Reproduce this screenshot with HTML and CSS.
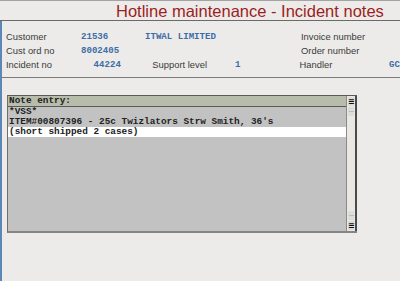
FILE: index.html
```html
<!DOCTYPE html>
<html lang="en">
<head>
  <meta charset="UTF-8">
  <title>Hotline maintenance - Incident notes</title>
  <link rel="stylesheet" href="styles.css">
</head>
<body>
  <div class="screen">
    <!-- Title bar -->
    <div class="title-bar">
      <h1>Hotline maintenance - Incident notes</h1>
    </div>

    <div class="main">
      <!-- Incident header fields -->
      <div class="info">
        <div class="row">
          <span class="lbl w-lbl">Customer</span>
          <span class="val w-code">21536</span>
          <span class="val w-name">ITWAL LIMITED</span>
          <span class="lbl">Invoice number</span>
        </div>
        <div class="row">
          <span class="lbl w-lbl">Cust ord no</span>
          <span class="val w-order">8002405</span>
          <span class="lbl">Order number</span>
        </div>
        <div class="row">
          <span class="lbl w-lbl">Incident no</span>
          <span class="val w-inc">44224</span>
          <span class="lbl w-sup">Support level</span>
          <span class="val w-lvl">1</span>
          <span class="lbl w-hdl">Handler</span>
          <span class="val">GC</span>
        </div>
      </div>

      <!-- Notes area -->
      <div class="notes-area">
        <div class="note-box">
          <div class="note-text">
            <div class="note-head">Note entry:</div>
            <div class="note-line">*VSS*</div>
            <div class="note-line">ITEM#00807396 - 25c Twizlators Strw Smith, 36's</div>
            <div class="note-line current">(short shipped 2 cases)</div>
          </div>
          <div class="scroll">
            <div class="sbtn dark">&#8801;</div>
            <div class="sbtn light">&minus;</div>
            <div class="track"></div>
            <div class="sbtn light">&minus;</div>
            <div class="sbtn dark">&#8801;</div>
          </div>
        </div>
      </div>
    </div>
  </div>
</body>
</html>
```

FILE: styles.css
```css
/* Reset */
* {
  box-sizing: border-box;
  margin: 0;
  padding: 0;
}
body {
  background: #ecebe9;
  font-family: 'Liberation Sans', Arial, sans-serif;
  color: #3a3a3a;
  overflow: hidden;
}
.screen {
  width: 400px;
  height: 281px;
  border-top: 1px solid #a4a4a2;
  display: flex;
  flex-direction: column;
}
/* Title */
.title-bar {
  height: 20px;
  border-bottom: 1px solid #6a6a68;
  padding-left: 116px;
}
.title-bar h1 {
  font-weight: normal;
  font-size: 16.5px;
  line-height: 20px;
  color: #9c1e22;
  white-space: nowrap;
}
.main {
  flex: 1;
  display: flex;
  flex-direction: column;
  border-left: 2px solid #5b86b5;
}
/* Header fields */
.info {
  height: 57px;
  padding: 8px 0 0 4px;
  border-bottom: 1px solid #7a7a78;
  overflow: hidden;
}
.row {
  display: flex;
  align-items: center;
  height: 14px;
  white-space: nowrap;
}
.lbl {
  font-size: 9.4px;
  color: #3a3a3a;
}
.val {
  font-family: 'Liberation Mono', monospace;
  font-weight: bold;
  font-size: 9.1px;
  color: #3d6ea6;
}
.w-lbl { width: 75px; }
.w-code { width: 64px; }
.w-name { width: 156px; }
.w-order { width: 220px; }
.w-inc { width: 72px; padding-left: 13px; }
.w-sup { width: 83px; }
.w-lvl { width: 65px; }
.w-hdl { width: 90px; }
/* Notes */
.notes-area {
  flex: 1;
  padding: 17px 0 0 5px;
}
.note-box {
  width: 350px;
  height: 138px;
  display: flex;
  border-top: 1px solid #5a5a58;
  border-left: 1px solid #6e6e6e;
  border-bottom: 2px solid #858585;
  background: #c2c2c2;
}
.note-text {
  flex: 1;
  font-family: 'Liberation Mono', monospace;
  font-weight: bold;
  font-size: 9.4px;
  color: #222;
}
.note-head {
  height: 11px;
  line-height: 10px;
  padding-left: 1px;
  background: #b7bcab;
  border-bottom: 1px solid #5a5a58;
}
.note-line {
  height: 10px;
  line-height: 10px;
  padding-left: 1px;
  white-space: nowrap;
}
.note-line.current {
  background: #fff;
}
/* Scrollbar */
.scroll {
  width: 11px;
  display: flex;
  flex-direction: column;
  background: #e9e8e2;
  border-left: 1px solid #8a8a88;
  border-right: 2px solid #4a4a48;
  padding: 1px 0;
}
.sbtn {
  height: 9px;
  margin: 0 1px;
  font-size: 8px;
  line-height: 9px;
  text-align: center;
  background: #dcdcd8;
  font-family: 'DejaVu Sans', sans-serif;
}
.sbtn.dark {
  color: #111;
  font-weight: bold;
}
.sbtn.light {
  color: #b0b0b0;
  margin-top: 1px;
  margin-bottom: 1px;
}
.track {
  flex: 1;
}
```
